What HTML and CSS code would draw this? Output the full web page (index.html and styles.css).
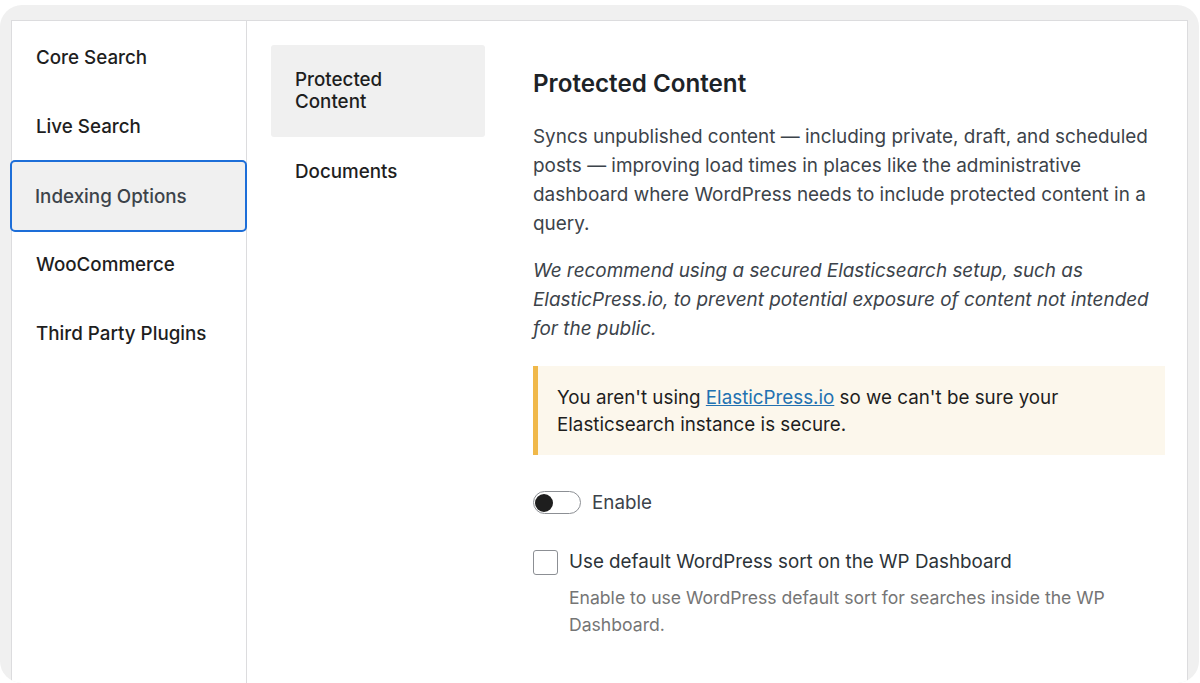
FILE: index.html
```html
<!DOCTYPE html>
<html>
<head>
<meta charset="utf-8">
<link rel="stylesheet" href="styles.css">
</head>
<body>
<div class="frame">
  <div class="panel">
    <nav class="side">
      <div class="side-item">Core Search</div>
      <div class="side-item">Live Search</div>
      <div class="side-item active">Indexing Options</div>
      <div class="side-item">WooCommerce</div>
      <div class="side-item">Third Party Plugins</div>
    </nav>
    <nav class="tabs">
      <div class="tab active">Protected<br>Content</div>
      <div class="tab">Documents</div>
    </nav>
    <main class="content">
      <h2 class="title">Protected Content</h2>
      <p class="desc">Syncs unpublished content — including private, draft, and scheduled posts — improving load times in places like the administrative dashboard where WordPress needs to include protected content in a query.</p>
      <p class="desc italic">We recommend using a secured Elasticsearch setup, such as ElasticPress.io, to prevent potential exposure of content not intended for the public.</p>
      <div class="notice">You aren't using <a href="#" class="link">ElasticPress.io</a> so we can't be sure your Elasticsearch instance is secure.</div>
      <div class="toggle-row">
        <span class="toggle"><span class="knob"></span></span>
        <span class="toggle-label">Enable</span>
      </div>
      <div class="check-row">
        <span class="checkbox"></span>
        <div class="check-text">
          <div class="check-label">Use default WordPress sort on the WP Dashboard</div>
          <div class="help">Enable to use WordPress default sort for searches inside the WP Dashboard.</div>
        </div>
      </div>
    </main>
  </div>
</div>
</body>
</html>
```
FILE: styles.css
```css
html, body {
  margin: 0;
  padding: 0;
  background: #ffffff;
  overflow: hidden;
  height: 683px;
}
body {
  font-family: Inter, "Noto Sans", sans-serif;
  color: #1e1e1e;
}
.frame {
  margin-top: 5px;
  height: 678px;
  background: #f0f0f0;
  border-radius: 22px;
  padding: 15px 11px 0 11px;
  box-sizing: border-box;
  width: 1199px;
  overflow: hidden;
}
.panel {
  background: #ffffff;
  border: 1px solid #dcdcde;
  border-bottom: none;
  height: 663px;
  box-sizing: border-box;
  display: flex;
}
.side {
  width: 234px;
  border-right: 1px solid #dcdcde;
  display: flex;
  flex-direction: column;
  padding-top: 2px;
}
.side-item {
  height: 69px;
  display: flex;
  align-items: center;
  padding-left: 24px;
  font-size: 18.8px;
  font-weight: 500;
  color: #1e1e1e;
  box-sizing: border-box;
}
.side-item.active {
  background: #f0f0f0;
  border: 2px solid #1d6ed8;
  border-radius: 5px;
  padding-left: 23px;
  margin-left: -2px;
  margin-right: -1px;
  color: #3c434a;
  height: 72px;
  margin-top: -1px;
  margin-bottom: -2px;
}
.tabs {
  width: 214px;
  padding: 24px 24px 0 24px;
  display: flex;
  flex-direction: column;
}
.tab {
  font-size: 18.8px;
  font-weight: 500;
  line-height: 22px;
  padding: 24px 24px;
  color: #1e1e1e;
  border-radius: 3px;
}
.tab.active {
  background: #f0f0f0;
}
.content {
  flex: 1;
  padding: 47px 22px 0 24px;
}
.title {
  margin: 0 0 22px 0;
  font-size: 24.2px;
  font-weight: 600;
  color: #1d2327;
  line-height: 32px;
}
.desc {
  margin: 0 0 18px 0;
  font-size: 18.9px;
  line-height: 29px;
  color: #3c434a;
}
.italic {
  font-style: italic;
}
.notice {
  background: #fcf7ec;
  border-left: 5px solid #f0b849;
  padding: 18px 20px 17px 19px;
  font-size: 18.8px;
  line-height: 27px;
  color: #1e1e1e;
  margin-top: 23px;
}
.link {
  color: #2271b1;
  text-decoration: underline;
}
.toggle-row {
  display: flex;
  align-items: center;
  margin-top: 36px;
  gap: 11px;
}
.toggle {
  height: 21px;
  border: 1px solid #8c8f94;
  border-radius: 12px;
  display: flex;
  align-items: center;
  padding: 0 1px;
  box-sizing: content-box;
  width: 44px;
}
.knob {
  width: 18px;
  height: 18px;
  border-radius: 50%;
  background: #1e1e1e;
}
.toggle-label {
  font-size: 18.8px;
  color: #3c434a;
}
.check-row {
  display: flex;
  gap: 11px;
  margin-top: 36px;
}
.checkbox {
  width: 23px;
  height: 23px;
  border: 1px solid #8c8f94;
  border-radius: 3px;
  flex: none;
}
.check-label {
  font-size: 18.8px;
  line-height: 24px;
  color: #2c3338;
}
.help {
  margin-top: 10px;
  font-size: 17.6px;
  line-height: 27px;
  color: #757575;
}
```
